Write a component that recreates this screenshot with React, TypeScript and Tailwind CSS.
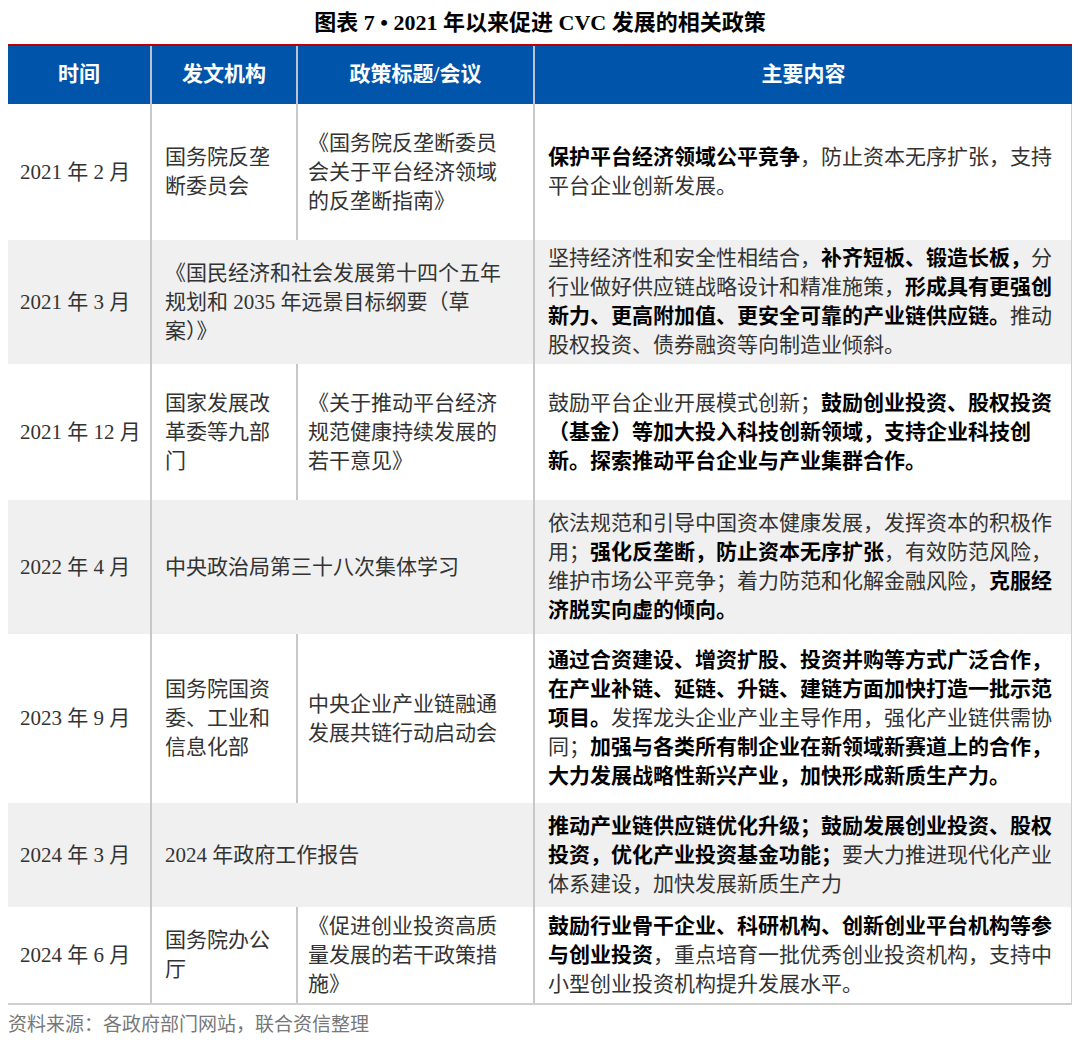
import React from "react";

type Seg = [string, boolean];
type Row = { t: string; org?: string; title: string; merged?: boolean; h: number; gray: boolean; c: Seg[] };

const rows: Row[] = [
  { t: "2021 年 2 月", org: "国务院反垄\n断委员会", title: "《国务院反垄断委员\n会关于平台经济领域\n的反垄断指南》", h: 136, gray: false,
    c: [["保护平台经济领域公平竞争", true], ["，防止资本无序扩张，支持平台企业创新发展。", false]] },
  { t: "2021 年 3 月", merged: true, title: "《国民经济和社会发展第十四个五年\n规划和 2035 年远景目标纲要（草\n案）》", h: 124, gray: true,
    c: [["坚持经济性和安全性相结合，", false], ["补齐短板、锻造长板，", true], ["分行业做好供应链战略设计和精准施策，", false], ["形成具有更强创新力、更高附加值、更安全可靠的产业链供应链。", true], ["推动股权投资、债券融资等向制造业倾斜。", false]] },
  { t: "2021 年 12 月", org: "国家发展改\n革委等九部\n门", title: "《关于推动平台经济\n规范健康持续发展的\n若干意见》", h: 136, gray: false,
    c: [["鼓励平台企业开展模式创新；", false], ["鼓励创业投资、股权投资（基金）等加大投入科技创新领域，支持企业科技创新。探索推动平台企业与产业集群合作。", true]] },
  { t: "2022 年 4 月", merged: true, title: "中央政治局第三十八次集体学习", h: 134, gray: true,
    c: [["依法规范和引导中国资本健康发展，发挥资本的积极作用；", false], ["强化反垄断，防止资本无序扩张", true], ["，有效防范风险，维护市场公平竞争；着力防范和化解金融风险，", false], ["克服经济脱实向虚的倾向。", true]] },
  { t: "2023 年 9 月", org: "国务院国资\n委、工业和\n信息化部", title: "中央企业产业链融通\n发展共链行动启动会", h: 169, gray: false,
    c: [["通过合资建设、增资扩股、投资并购等方式广泛合作，在产业补链、延链、升链、建链方面加快打造一批示范项目。", true], ["发挥龙头企业产业主导作用，强化产业链供需协同；", false], ["加强与各类所有制企业在新领域新赛道上的合作，大力发展战略性新兴产业，加快形成新质生产力。", true]] },
  { t: "2024 年 3 月", merged: true, title: "2024 年政府工作报告", h: 104, gray: true,
    c: [["推动产业链供应链优化升级；鼓励发展创业投资、股权投资，优化产业投资基金功能；", true], ["要大力推进现代化产业体系建设，加快发展新质生产力", false]] },
  { t: "2024 年 6 月", org: "国务院办公\n厅", title: "《促进创业投资高质\n量发展的若干政策措\n施》", h: 96, gray: false,
    c: [["鼓励行业骨干企业、科研机构、创新创业平台机构等参与创业投资", true], ["，重点培育一批优秀创业投资机构，支持中小型创业投资机构提升发展水平。", false]] },
];

const font = { fontFamily: '"Liberation Serif", "Noto Sans CJK SC", serif' };

export default function App() {
  return (
    <div className="w-[1080px] h-[1041px] bg-white text-[#333] relative" style={font}>
      <div className="h-[44px] flex items-center justify-center text-[22px] font-bold text-black">
        图表 7 • 2021 年以来促进 CVC 发展的相关政策
      </div>
      <div className="mx-[8px] border-t-[2px] border-[#c00000]">
        <div className="flex h-[58px] bg-[#0055aa] text-white text-[21px] font-bold items-stretch">
          <div className="w-[144px] flex items-center justify-center border-r-2 border-[#b8c4d4]">时间</div>
          <div className="w-[146px] flex items-center justify-center border-r-2 border-[#b8c4d4]">发文机构</div>
          <div className="w-[237px] flex items-center justify-center border-r-2 border-[#b8c4d4]">政策标题/会议</div>
          <div className="flex-1 flex items-center justify-center">主要内容</div>
        </div>
        <div className="border-b-2 border-r border-[#cfcfcf]">
          {rows.map((r, i) => (
            <div key={i} className={`flex text-[21px] leading-[29px] ${r.gray ? "bg-[#f0f0f0]" : "bg-white"}`} style={{ height: r.h }}>
              <div className="w-[144px] flex items-center pl-[12px] border-r-2 border-[#c8c8c8] whitespace-nowrap">{r.t}</div>
              {r.merged ? (
                <div className="w-[383px] flex items-center pl-[13px] pr-[10px] border-r-2 border-[#c8c8c8] whitespace-pre-line">{r.title}</div>
              ) : (
                <>
                  <div className="w-[146px] flex items-center pl-[13px] border-r-2 border-[#c8c8c8] whitespace-pre">{r.org}</div>
                  <div className="w-[237px] flex items-center pl-[10px] border-r-2 border-[#c8c8c8] whitespace-pre">{r.title}</div>
                </>
              )}
              <div className="flex-1 flex items-center pl-[13px] pr-[12px]">
                <p>
                  {r.c.map(([s, b], j) => (
                    <span key={j} className={b ? "font-bold text-black" : ""}>{s}</span>
                  ))}
                </p>
              </div>
            </div>
          ))}
        </div>
      </div>
      <div className="pl-[8px] mt-[6px] text-[19px] text-[#777]">资料来源：各政府部门网站，联合资信整理</div>
    </div>
  );
}
